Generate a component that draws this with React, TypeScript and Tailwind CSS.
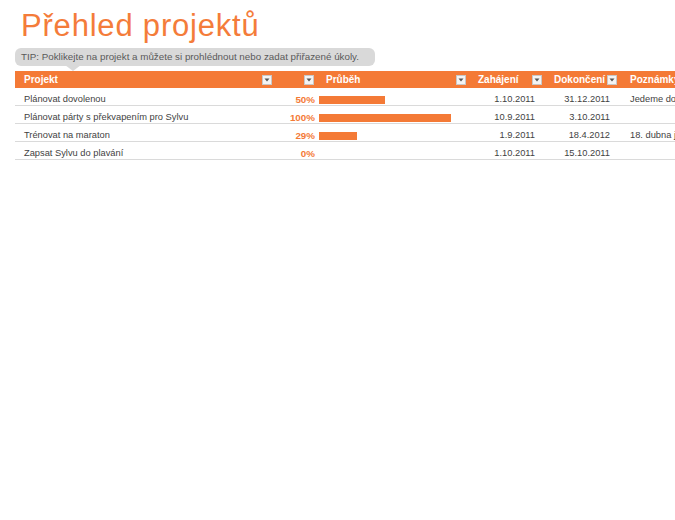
import React from 'react';

const rows = [
  { name: 'Plánovat dovolenou', pct: 50, start: '1.10.2011', end: '31.12.2011', note: 'Jedeme do hor na týden' },
  { name: 'Plánovat párty s překvapením pro Sylvu', pct: 100, start: '10.9.2011', end: '3.10.2011', note: '' },
  { name: 'Trénovat na maraton', pct: 29, start: '1.9.2011', end: '18.4.2012', note: '18. dubna je závod' },
  { name: 'Zapsat Sylvu do plavání', pct: 0, start: '1.10.2011', end: '15.10.2011', note: '' },
];

function Drop() {
  return (
    <span className="flex h-[10px] w-[10px] shrink-0 items-center justify-center border border-[#c8c8c8] bg-[#f4f4f4]">
      <svg width="6" height="4" viewBox="0 0 6 4">
        <path d="M0.5 0.5 L5.5 0.5 L3 3.5 Z" fill="#555" />
      </svg>
    </span>
  );
}

const grid = 'grid grid-cols-[261px_42px_152px_76px_75px_1fr]';

export default function App() {
  return (
    <div className="h-[520px] w-[675px] overflow-hidden bg-white font-['Liberation_Sans',sans-serif] text-[10px] text-[#3f3f3f]">
      <h1 className="pl-[21px] pt-[7px] text-[31px] font-light leading-[38px] tracking-[0.8px] text-[#f47c3a]">Přehled projektů</h1>
      <div className="relative ml-[15px] mt-[3px] flex h-[18px] w-[360px] items-center rounded-[6px] bg-[#d9d9d9] pl-[6px] text-[9.8px] text-[#595959]">
        TIP: Poklikejte na projekt a můžete si prohlédnout nebo zadat přiřazené úkoly.
        <span className="absolute left-[50px] top-[17px] h-0 w-0 border-x-[8px] border-t-[6px] border-x-transparent border-t-[#d9d9d9]" />
      </div>
      <div className="ml-[15px] mt-[5px] w-[660px]">
        <div className={`${grid} h-[17px] items-center bg-[#f47a36] font-bold text-white`}>
          <div className="flex items-center justify-between pl-[9px] pr-[4px]">Projekt<Drop /></div>
          <div className="flex items-center justify-end pr-[4px]"><Drop /></div>
          <div className="flex items-center justify-between pl-[8px] pr-[4px]">Průběh<Drop /></div>
          <div className="flex items-center justify-between pl-[8px] pr-[4px]">Zahájení<Drop /></div>
          <div className="flex items-center justify-between pl-[8px] pr-[4px]">Dokončení<Drop /></div>
          <div className="overflow-hidden whitespace-nowrap pl-[9px]">Poznámky</div>
        </div>
        {rows.map((r) => (
          <div key={r.name} className={`${grid} h-[18px] items-center border-b border-[#dadada] pt-[5px] text-[9.3px]`}>
            <div className="whitespace-nowrap pl-[9px]">{r.name}</div>
            <div className="pr-[3px] text-right text-[9.8px] font-bold text-[#f47a36]">{r.pct}%</div>
            <div className="pl-[1px]">
              {r.pct > 0 && <div className="h-[8px] bg-[#f47a36]" style={{ width: `${(r.pct * 132) / 100}px` }} />}
            </div>
            <div className="pr-[11px] text-right">{r.start}</div>
            <div className="pr-[11px] text-right">{r.end}</div>
            <div className="overflow-hidden whitespace-nowrap pl-[9px]">{r.note}</div>
          </div>
        ))}
      </div>
    </div>
  );
}
